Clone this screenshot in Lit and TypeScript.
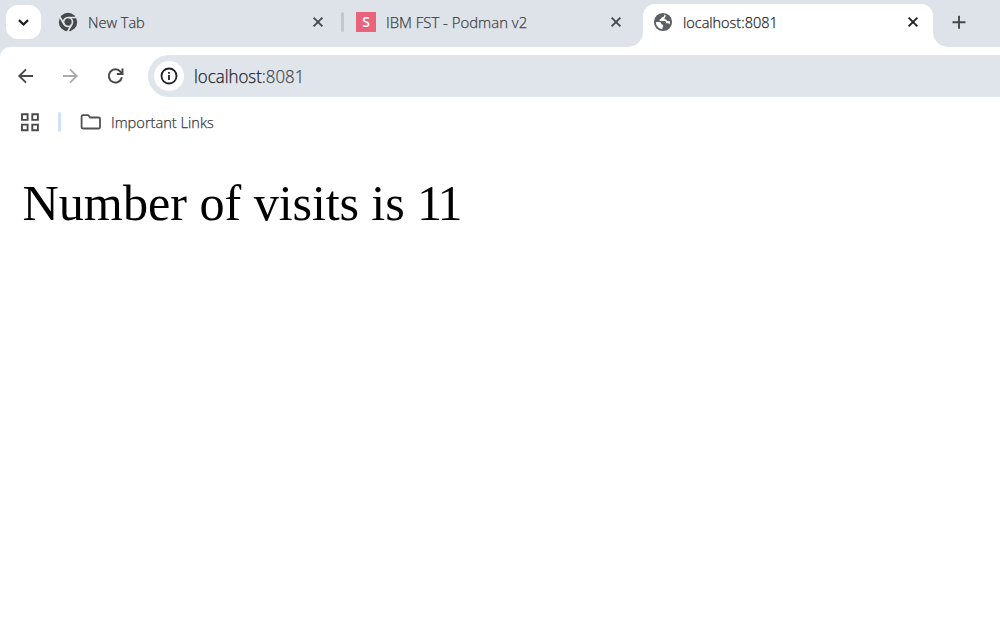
import { LitElement, html, css, svg } from "lit";
import { customElement } from "lit/decorators.js";

const icons = {
  chevron: svg`<path d="M19 19.6l4.5 4.4 4.5-4.4" transform="translate(-15 -13.5)" fill="none" stroke="#1c1d1f" stroke-width="2.2"/>`,
};

@customElement("app-root")
export class AppRoot extends LitElement {
  static styles = css`
    :host { display: block; width: 1000px; height: 626px; overflow: hidden; background: #dee3ea; }
    * { box-sizing: border-box; }
    svg { display: block; flex: none; }
    .strip { display: flex; height: 47px; font: 15px/20px "Open Sans", "Noto Sans", sans-serif; color: #3f4245; }
    .search { width: 35px; height: 34px; margin: 5px 17px 0 6px; border-radius: 12px; background: #fff; display: flex; align-items: center; justify-content: center; }
    .tab { display: flex; align-items: center; height: 44px; white-space: nowrap; }
    .first { width: 283px; }
    .first .close { margin-right: 16px; }
    .second { width: 302px; }
    .second .close { margin-right: 20.5px; }
    .active { width: 290px; height: 43px; margin-top: 4px; padding: 0 0 7px 10px; background: #fff; border-radius: 12px 12px 0 0; color: #202124; }
    .label { flex: 1; margin-left: 10px; font-weight: 300; -webkit-text-stroke: .25px currentColor; }
    .label span, .url > span, .folder span { display: inline-block; transform-origin: 0 50%; }
    .t1 { transform: scaleX(.97); }
    .t2 { transform: scaleX(.993); }
    .t3 { transform: scaleX(.965); }
    .t4 { transform: scaleX(.937); }
    .t5 { transform: scaleX(.975); }
    .active .close { margin-right: 13px; }
    .divider { width: 3px; height: 20px; border-radius: 2px; background: #c4c7ca; margin-right: 12px; }
    .s { width: 20px; height: 20px; background: #e8637b; color: #fff; font: 600 14px/20px "Open Sans", sans-serif; text-align: center; }
    .flare { align-self: flex-end; }
    .left { margin-left: -15px; }
    .plus { margin: 15px 0 0 3px; }
    .chrome { background: #fff; height: 579px; border-radius: 10px 0 0 0; padding-top: 8px; }
    .toolbar { display: flex; align-items: center; height: 42px; padding-left: 16px; }
    .nav { display: flex; gap: 25px; width: 132px; }
    .omnibox { flex: 1; height: 42px; border-radius: 21px 0 0 21px; background: #e0e5ec; display: flex; align-items: center; padding-left: 6px; }
    .info { width: 30px; height: 30px; border-radius: 50%; background: #fff; display: flex; align-items: center; justify-content: center; }
    .url { margin-left: 10px; font: 300 18px/24px "Open Sans", "Noto Sans", sans-serif; color: #202124; -webkit-text-stroke: .25px currentColor; }
    .port { color: #484b4e; }
    .bookmarks { display: flex; align-items: center; height: 50px; padding-left: 20px; }
    .bar { width: 3px; height: 20px; margin-left: 18px; border-radius: 2px; background: #d1e1fd; }
    .folder { display: flex; align-items: center; gap: 9px; margin-left: 18.5px; font: 300 15px/20px "Open Sans", "Noto Sans", sans-serif; color: #35373a; -webkit-text-stroke: .25px currentColor; white-space: nowrap; }
    .page { padding: 27px 0 0 22.5px; font: 50.2px/58px "Liberation Serif", "Times New Roman", serif; color: #000; white-space: nowrap; }
    .tight { letter-spacing: -.15px; }
    .count { letter-spacing: -2.6px; }
  `;

  private closeIcon(color: string) {
    return html`<svg class="close" width="14" height="14" viewBox="0 0 14 14"><path d="M2.6 2.6l8.8 8.8M11.4 2.6l-8.8 8.8" stroke=${color} stroke-width="1.9"/></svg>`;
  }

  render() {
    return html`
      <div class="strip">
        <div class="search"><svg width="17" height="17" viewBox="0 0 17 17">${icons.chevron}</svg></div>
        <div class="tab first">
          <svg width="20" height="20" viewBox="0 0 20 20">
            <circle cx="10" cy="10" r="9.2" fill="#46494c"/>
            <circle cx="10" cy="10" r="4.5" fill="none" stroke="#dee3ea" stroke-width="1.7"/>
            <path d="M10 5.5h9M6.1 12.25L1.6 4.5M13.9 12.25L9.4 20" stroke="#dee3ea" stroke-width="1.7"/>
          </svg>
          <div class="label"><span class="t1">New Tab</span></div>
          ${this.closeIcon("#46494c")}
        </div>
        <div class="tab second">
          <div class="divider"></div><div class="s">S</div>
          <div class="label"><span class="t2">IBM FST - Podman v2</span></div>
          ${this.closeIcon("#46494c")}
        </div>
        <svg class="flare left" width="15" height="15" viewBox="0 0 15 15"><path d="M15 0A15 15 0 0 1 0 15H15Z" fill="#fff"/></svg>
        <div class="tab active">
          <svg width="20" height="20" viewBox="0 0 20 20">
            <circle cx="10" cy="10" r="9.1" fill="#5c6065"/>
            <path d="M11.2 2.8C11.4 4.2 10.6 5 9.4 5.2 8.2 5.4 8.4 6.8 7.4 7.2 6.4 7.5 6.2 8.4 7 8.9h4.3c1.7.1 1.7 1.3 1.8 2.4h1.4c1 0 1.7.5 1.9 1.2A7.2 7.2 0 0 0 17.1 9.2h-2c-1.4 0-1.3-1.5-2.4-1.7-1.3-.3-1.5-1.3-.8-2 .8-.7.8-1.5.6-2.5ZM2.8 10.1h3.6c1.7.1 1.8 1.2 1.9 2.2 1.4.2 2 .8 1.9 1.9-.1.9-.8.9-.8 1.8v1.2a7.2 7.2 0 0 1-6.6-7.1Z" fill="#fff"/>
          </svg>
          <div class="label"><span class="t3">localhost:8081</span></div>
          ${this.closeIcon("#202124")}
        </div>
        <svg class="flare" width="15" height="15" viewBox="0 0 15 15"><path d="M0 0A15 15 0 0 0 15 15H0Z" fill="#fff"/></svg>
        <svg class="plus" width="15" height="15" viewBox="0 0 15 15"><path d="M8 .8v13M1.5 7.3h13" stroke="#46494c" stroke-width="1.9"/></svg>
      </div>
      <div class="chrome">
        <div class="toolbar">
          <div class="nav">
            <svg width="20" height="20" viewBox="0 0 20 20"><path d="M17 10H3.5M10 3.3L3.3 10l6.7 6.7" fill="none" stroke="#47494b" stroke-width="1.9"/></svg>
            <svg width="20" height="20" viewBox="0 0 20 20"><path d="M2 10h13.5M9 3.3l6.7 6.7L9 16.7" fill="none" stroke="#a9abad" stroke-width="1.9"/></svg>
            <svg width="20" height="20" viewBox="0 0 20 20"><path d="M15.9 11.2A6.6 6.6 0 1 1 14.6 5.8L16 7.4M16.5 2.5v5.4h-5.7" fill="none" stroke="#47494b" stroke-width="2"/></svg>
          </div>
          <div class="omnibox">
            <div class="info"><svg width="18" height="18" viewBox="0 0 18 18"><circle cx="9" cy="9" r="7.5" fill="none" stroke="#202124" stroke-width="1.8"/><path d="M9 8v5M9 5v1.8" stroke="#202124" stroke-width="1.8"/></svg></div>
            <div class="url"><span class="t4">localhost<span class="port">:8081</span></span></div>
          </div>
        </div>
        <div class="bookmarks">
          <svg width="20" height="20" viewBox="0 0 20 20"><path d="M2 2.3h5.6v5.6H2zM12.3 2.3h5.6v5.6h-5.6zM2 12.6h5.6v5.6H2zM12.3 12.6h5.6v5.6h-5.6z" fill="none" stroke="#47494b" stroke-width="1.9"/></svg>
          <div class="bar"></div>
          <div class="folder">
            <svg width="22" height="18" viewBox="0 0 22 18"><path d="M2.8 2.2h5.4l2 2.3h8.6q1.2 0 1.2 1.2v8.6q0 1.2-1.2 1.2h-16q-1.2 0-1.2-1.2V3.4q0-1.2 1.2-1.2Z" fill="none" stroke="#505254" stroke-width="1.8"/></svg>
            <span class="t5">Important Links</span>
          </div>
        </div>
        <div class="page">Number of <span class="tight">visits is </span><span class="count">11</span></div>
      </div>
    `;
  }
}
